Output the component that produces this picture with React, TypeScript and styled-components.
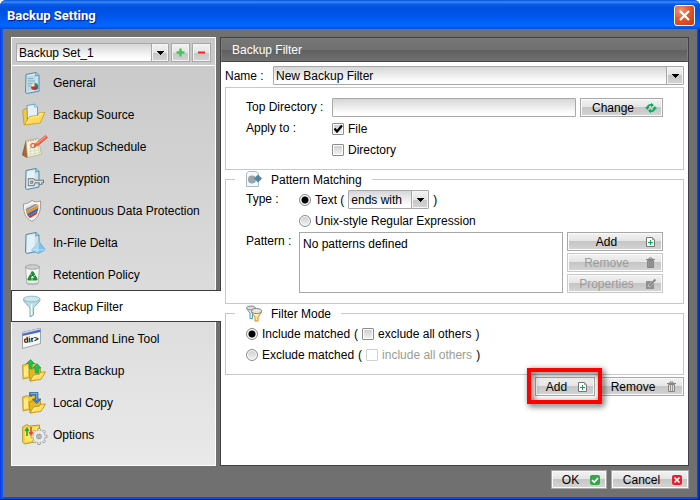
import React, { useState } from 'react';
import styled, { createGlobalStyle, css } from 'styled-components';

const GlobalStyle = createGlobalStyle`
  *, *::before, *::after { box-sizing: border-box; }
  body { margin: 0; background: #ffffff; }
  body, button, input, select {
    font-family: 'Liberation Sans', Arial, sans-serif;
    font-size: 12px;
    line-height: 16px;
    color: #000000;
  }
`;

const Window = styled.div`
  min-height: 100vh;
  display: flex;
  flex-direction: column;
  background: linear-gradient(90deg, #0831d9 0, #1660f0 2px, #0050e8 3px, #0050e8 calc(100% - 3px), #0040d8 calc(100% - 2px), #00138c 100%);
  border-bottom: 1px solid #00138c;
  border-radius: 6px 6px 0 0;
  overflow: hidden;
`;

const TitleBar = styled.header`
  height: 29px;
  flex: none;
  display: flex;
  align-items: center;
  justify-content: space-between;
  padding: 2px 5px 0 7px;
  background: linear-gradient(180deg, #0050d8 0%, #3c8cf8 7%, #0a5ce8 14%, #0050e0 28%, #0054e8 50%, #0062fc 78%, #0066ff 90%, #0048d0 100%);
`;

const Title = styled.h1`
  margin: 0;
  font: 700 13px/20px Roboto, 'Open Sans', sans-serif;
  color: #ffffff;
  text-shadow: 1px 1px 1px #0a1c80;
`;

const CloseButton = styled.button`
  width: 21px;
  height: 21px;
  padding: 0;
  display: grid;
  place-items: center;
  border: 1px solid #ffffff;
  border-radius: 3px;
  background: radial-gradient(circle at 30% 25%, #f09878 0%, #e5562c 45%, #c8370c 100%);
`;

const Body = styled.div`
  flex: 1;
  display: flex;
  flex-direction: column;
  gap: 4px;
  margin: 0 3px 2px;
  padding: 8px;
  background: #707070;
`;

const Columns = styled.div`
  flex: 1;
  display: flex;
  gap: 4px;
`;

const Sidebar = styled.aside`
  width: 205px;
  flex: none;
  border: 1px solid #ffffff;
  background: linear-gradient(180deg, #c8c8c8, #e9e9e9);
`;

const SetPicker = styled.div`
  display: flex;
  gap: 2px;
  padding: 5px 4px 3px;
  border-bottom: 1px solid #ffffff;
`;

const face = 'linear-gradient(180deg, #f2f2f2 0%, #e4e4e4 50%, #c6c6c6 50%, #d4d4d4 100%)';

const SquareButton = styled.button`
  width: 19px;
  height: 19px;
  padding: 0;
  display: grid;
  place-items: center;
  border: 1px solid #a8a8a8;
  background: ${face};
  box-shadow: inset 0 0 0 1px #f4f4f4;
`;

const SelectBox = styled.span<{ $grow?: boolean; $width?: number }>`
  display: inline-grid;
  height: 19px;
  border: 1px solid #a8a8a8;
  border-radius: 1px;
  background: #ffffff;
  ${p => p.$grow && css`flex: 1;`}
  ${p => p.$width && css`width: ${p.$width}px;`}
`;

const NativeSelect = styled.select`
  grid-area: 1 / 1;
  appearance: none;
  width: 100%;
  min-width: 0;
  height: 17px;
  border: 0;
  padding: 0 18px 0 2px;
  background: linear-gradient(180deg, #d6d6d6 0%, #ffffff 85%);
`;

const DropMark = styled.span`
  grid-area: 1 / 1;
  justify-self: end;
  display: grid;
  place-items: center;
  width: 17px;
  height: 17px;
  border-left: 1px solid #a8a8a8;
  background: ${face};
  box-shadow: inset 0 0 0 1px #f4f4f4;
  pointer-events: none;
`;

const NavList = styled.nav`
  display: flex;
  flex-direction: column;
`;

const NavItem = styled.a<{ $active?: boolean }>`
  display: flex;
  align-items: center;
  gap: 7px;
  height: 32px;
  padding: 2px 0 0 10px;
  color: #000000;
  text-decoration: none;
  white-space: nowrap;
  ${p => p.$active && css`
    position: relative;
    margin: 0 -6px 0 -1px;
    background: #ffffff;
    border: solid #3c3c3c;
    border-width: 1px 0 1px 1px;
  `}
`;

const NavIcon = styled.svg`
  width: 24px;
  height: 24px;
  flex: none;
  overflow: visible;
`;

const Panel = styled.main`
  flex: 1;
  min-width: 0;
  border: 1px solid #404040;
  background: #ffffff;
`;

const PanelTitle = styled.h2`
  margin: 0;
  height: 24px;
  padding: 3px 10px 4px;
  font-size: 12px;
  font-weight: 400;
  line-height: 16px;
  color: #ffffff;
  border: 1px solid #7c7c7c;
  border-bottom-color: #484848;
  background: linear-gradient(180deg, #757575 0%, #707070 48%, #5f5f5f 50%, #707070 100%);
`;

const PanelBody = styled.form`
  padding: 4px;
`;

const NameRow = styled.div`
  display: flex;
  align-items: center;
  margin-bottom: 2px;
`;

const NameLabel = styled.label`
  width: 48px;
`;

const Group = styled.fieldset`
  margin: 0;
  min-width: 0;
  padding: 10px 20px;
  border: 1px solid #c8c8c8;
`;

const TitledGroup = styled(Group)`
  margin-top: 1px;
  padding-top: 2px;
`;

const GroupTitle = styled.legend`
  display: flex;
  align-items: center;
  gap: 8px;
  height: 17px;
  margin-left: -11px;
  padding: 0 10px;
`;

const Rows = styled.div`
  display: grid;
  gap: 2px;
`;

const LabelledRows = styled.div<{ $label: number }>`
  display: grid;
  grid-template-columns: ${p => p.$label}px minmax(0, 1fr);
  gap: 2px 0;
`;

const Line = styled.div`
  display: flex;
  align-items: center;
  gap: 4px;
  min-height: 19px;
  white-space: nowrap;
`;

const SecondLine = styled(Line)`
  grid-column: 2;
`;

const FieldLabel = styled.label`
  line-height: 19px;
  white-space: nowrap;
`;

const TextInput = styled.input`
  flex: 1;
  min-width: 0;
  height: 19px;
  padding: 0 2px;
  border: 1px solid #a8a8a8;
  border-radius: 1px;
  background: linear-gradient(180deg, #d6d6d6 0%, #ffffff 85%);
`;

const Choice = styled.label<{ $off?: boolean }>`
  display: inline-flex;
  align-items: center;
  gap: 4px;
  color: ${p => (p.$off ? '#9c9c90' : '#000000')};
`;

const TickFrame = styled.span`
  display: inline-grid;
  place-items: center;
  width: 12px;
  height: 12px;
`;

const TickMark = styled.svg`
  grid-area: 1 / 1;
  pointer-events: none;
  visibility: hidden;
  input:checked + & { visibility: visible; }
`;

const Tick = styled.input`
  grid-area: 1 / 1;
  appearance: none;
  width: 12px;
  height: 12px;
  margin: 0;
  border: 1px solid #8c8c8c;
  border-radius: 1px;
  background: linear-gradient(180deg, #cccccc, #f4f4f4);
  box-shadow: inset 0 0 0 1px #ffffff;
  &:disabled { border-color: #d2d2d2; background: #ffffff; }
`;

const Radio = styled.input`
  appearance: none;
  width: 12px;
  height: 12px;
  margin: 0;
  border: 1px solid #8c8c8c;
  border-radius: 50%;
  background: linear-gradient(180deg, #cccccc, #f4f4f4);
  box-shadow: inset 0 0 0 1px #ffffff;
  &:checked { background: radial-gradient(circle, #000000 0 3px, #dddddd 4px); }
`;

const PatternList = styled.ul`
  flex: 1;
  min-width: 0;
  height: 61px;
  margin: 0;
  padding: 3px;
  list-style: none;
  border: 1px solid #a8a8a8;
`;

const ButtonStack = styled.div`
  display: grid;
  gap: 2px;
`;

const Button = styled.button<{ $width: number }>`
  width: ${p => p.$width}px;
  height: 19px;
  display: flex;
  align-items: center;
  padding: 0 5px 0 0;
  border: 1px solid #a8a8a8;
  background: ${face};
  box-shadow: inset 0 0 0 1px #fafafa;
  &:disabled { color: #9c9c9c; border-color: #c8c8c8; }
`;

const Caption = styled.span`
  flex: 1;
  text-align: center;
`;

const ButtonIcon = styled.svg`
  width: 12px;
  height: 12px;
  flex: none;
`;

const Actions = styled.div<{ $top?: number }>`
  display: flex;
  justify-content: flex-end;
  gap: 4px;
  margin-top: ${p => p.$top ?? 0}px;
`;

const Marked = styled.div`
  position: relative;
  z-index: 1;
`;

const Marker = styled.span`
  position: absolute;
  inset: -9px -7px -8px -8px;
  border: 4px solid #ff0000;
  filter: drop-shadow(2px 2px 3px rgba(0, 0, 0, 0.75));
  pointer-events: none;
`;

type DropDownProps = { id?: string; label?: string; options: string[]; grow?: boolean; width?: number };

const DropDown = ({ id, label, options, grow, width }: DropDownProps) => (
  <SelectBox $grow={grow} $width={width}>
    <NativeSelect id={id} aria-label={label}>
      {options.map(o => <option key={o}>{o}</option>)}
    </NativeSelect>
    <DropMark>
      <svg width="8" height="4" viewBox="0 0 8 4" shapeRendering="crispEdges"><path d="M0 0h8L4 4z" /></svg>
    </DropMark>
  </SelectBox>
);

const CheckBox = (props: React.InputHTMLAttributes<HTMLInputElement>) => (
  <TickFrame>
    <Tick type="checkbox" {...props} />
    <TickMark width="12" height="12" viewBox="0 0 12 12">
      <path d="M2.5 5.5 5 8.5 10 2.5" fill="none" stroke="#000" strokeWidth="2.2" />
    </TickMark>
  </TickFrame>
);

const Sheet = ({ children }: { children?: React.ReactNode }) => (
  <NavIcon viewBox="0 0 24 24">
    <path d="M4 3.5 14 1.5l3 2.6v16L4.6 22.5 3.5 21z" fill="#c9e3ed" stroke="#5588a4" />
    <path d="M5 4.5 13 3l-1 17-7 1.5z" fill="#fff" opacity=".5" />
    <path d="m14 1.5-.5 3.6 3.5-1" fill="#a4cbe0" stroke="#5588a4" strokeWidth=".7" />
    {children}
  </NavIcon>
);

const GeneralIcon = () => (
  <Sheet>
    <path d="M5 5 13 4v15l-8 2z" fill="#9fcbd8" opacity=".6" />
    <path d="M6 7.5h5M6 10h7M6 12.5h4M6 15h3" stroke="#7fb3c5" />
    <circle cx="12.5" cy="15.5" r="3.600" fill="#d62b20" />
    <path d="M12.5 15.5v-3.600a3.600 3.600 0 0 1 3.600 3.600z" fill="#2c9b50" />
    <path d="M12.5 15.5H8.9a3.600 3.600 0 0 1 3.600-3.600z" fill="#f0e8d0" />
    <path d="M12.5 15.5h3.600a3.600 3.600 0 0 1-2.600 3.500z" fill="#2b65ae" />
  </Sheet>
);

const SourceIcon = () => (
  <NavIcon viewBox="0 0 24 24">
    <path d="M.7 8.500 2 6l4-.5 2 2v13l-6 1z" fill="#f3c938" stroke="#b78b20" strokeWidth=".7" />
    <path d="m5 2.500 7.500-1.300 3 2.600v13L5.500 19z" fill="#e3f3f9" stroke="#6ba0bd" />
    <path d="m12.500 1.200-.2 3 3.200-.4" fill="#b9d9e8" stroke="#6ba0bd" strokeWidth=".6" />
    <path d="m2.500 22 5-8.500 8.500-1 1-2.500 5.800-.5-4.500 10.500z" fill="#ffdb53" stroke="#c79b28" strokeWidth=".8" />
    <path d="m4.500 20.500 4-6 8-1 1-2.500 3.500-.4" fill="none" stroke="#fff3a5" />
  </NavIcon>
);

const ScheduleIcon = () => (
  <NavIcon viewBox="0 0 24 24">
    <path d="m4 6-3.600 14L5 22.500 7 15z" fill="#a96735" stroke="#78421c" strokeWidth=".6" />
    <path d="m4 5.500 12-2.200 3.500 15.900-14 3.300z" fill="#f5f2dc" stroke="#b8a484" strokeWidth=".7" />
    <path d="M7 10l9-1.500M7.500 13.300l9.500-1.600M7.500 16.500l10-1.700M7.500 19.500l10.500-2M9 9 8 21M12.500 8l.5 12.500M15.500 8l2 11" stroke="#a6c49b" strokeWidth=".4" />
    <path d="M5.500 6.300 15 4.500" stroke="#b59a78" strokeWidth="1.200" strokeDasharray="1.500 1" />
    <circle cx="11" cy="10.500" r="2.200" fill="none" stroke="#e66a50" strokeWidth="1.200" />
    <path d="m12 11.500 2-3.500L23.500.5l2 2-9.500 8z" fill="#ef684b" stroke="#c8402c" strokeWidth=".6" />
    <path d="m14.500 8.500 9-7" stroke="#ffb0a0" />
  </NavIcon>
);

const EncryptionIcon = () => (
  <Sheet>
    <g fill="none" stroke="#6d7376" strokeWidth="3.400"><path d="M7.500 13h3.500l1.500 1.500-1.500 3H7.500z" /><path d="M12.500 14.500h9.500M18.500 15v3" /></g>
    <g fill="none" stroke="#dfe2e3" strokeWidth="1.600"><path d="M7.500 13h3.500l1.500 1.500-1.500 3H7.500z" /><path d="M12.500 14.500H21M18.500 15v2.200" /></g>
  </Sheet>
);

const ShieldIcon = () => (
  <NavIcon viewBox="0 0 24 24">
    <path d="M1.500 5c3 0 6-1.400 8.500-3.500C12.500 3 15 3.500 18.500 1.800c.8 8-1 16.700-8.700 20.500C3.600 19.300 1 13 1.500 5z" fill="#faf8f2" stroke="#a59a8d" />
    <path d="M3.500 7c3-.3 4.500-1.300 6.500-2.900 2 1 4 1.400 6.500.6.2 7.200-1.300 12.100-6.800 15.200C5.300 17.300 3.500 13 3.500 7z" fill="#e4e6e8" />
    <path d="m3.600 10 9.600-5c1 .4 2 .4 3.200 0L4 12.300z" fill="#8c9298" />
    <path d="m4 12.300 12.400-6.500v2.800L4.800 15z" fill="#f08c28" />
    <path d="m4.800 15 11.600-6.300-.4 3L6.200 17.500z" fill="#2f6fb8" />
    <path d="m6.200 17.500 9.700-5.400-1.400 3.200L8 19z" fill="#c83835" />
  </NavIcon>
);

const DeltaIcon = () => (
  <Sheet>
    <path d="m17 10.500 6.300 8.300-7 3.700-6.800-3.500z" fill="#a8daf3" stroke="#5f9ec8" strokeWidth=".8" />
    <path d="m17 10.500-.7 12 7-3.700z" fill="#73b5df" opacity=".7" />
    <path d="m17 10.500-7.500 8.500 13.800-.2" fill="none" stroke="#d9f3ff" strokeWidth=".6" />
  </Sheet>
);

const BinIcon = () => (
  <NavIcon viewBox="0 0 24 24">
    <path d="M3.500 4h14l-1.300 16.500c-2 1.700-9.400 1.700-11.400 0z" fill="#f4f4f4" stroke="#a5a5a5" strokeWidth=".8" />
    <ellipse cx="10.500" cy="4" rx="7" ry="2.300" fill="#cccece" stroke="#98999a" strokeWidth=".8" />
    <path d="M5 19c3 1.200 8 1.200 11 0l-.3 2c-2 1.300-8.400 1.300-10.400 0z" fill="#bcbcbc" />
    <path d="m10.500 9.500-3.800 6.800h7.600z" fill="none" stroke="#12942c" strokeWidth="2.600" strokeLinejoin="round" />
    <path d="m8 10.500 1.500 1.500M13.500 12l-1.500 1M10 17.500v-2.500" stroke="#f4f4f4" strokeWidth=".8" />
  </NavIcon>
);

const FunnelIcon = () => (
  <NavIcon viewBox="0 0 24 24">
    <path d="M1.500 4c0 4.500 6 6 6.500 10v8l3.500-2v-6c.5-4 6.500-5.500 6.500-10z" fill="#bcdce2" stroke="#74a8b5" strokeWidth=".9" />
    <ellipse cx="9.750" cy="4" rx="8.250" ry="2.800" fill="#cce8ed" stroke="#8db9c3" strokeWidth=".9" />
    <path d="M9.500 9v11" stroke="#eefafa" strokeWidth="1.500" />
  </NavIcon>
);

const TerminalLabel = styled.text`
  font: 700 8px 'Liberation Sans', sans-serif;
`;

const CommandIcon = () => (
  <NavIcon viewBox="0 0 24 24">
    <path d="m.5 5.500 18-4v15L.5 21.500z" fill="#f8f8f8" stroke="#8d9298" strokeWidth=".8" />
    <path d="m.5 5 18-4v4L.5 9z" fill="#4a6dc5" />
    <path d="m.5 5 18-4v1.600L.5 6.700z" fill="#d2d3dc" />
    <TerminalLabel x="2" y="16" transform="rotate(-7 2 16)">dir&gt;</TerminalLabel>
  </NavIcon>
);

const YellowFolders = () => (
  <>
    <path d="m.6 6 5-1.500 1.500 1.300 6-1.500v13L1 20z" fill="#f5ce3b" stroke="#b58e24" strokeWidth=".8" />
    <path d="m2 8 4-1v10l-4 1z" fill="#ffec83" />
    <path d="m7 11 4-1.500 1.500 1 6-1v10L8 22z" fill="#e4b72a" stroke="#a98018" strokeWidth=".7" />
    <path d="m8 22 3.500-6 6-.7 1-2 5-.4-4.500 7.500z" fill="#ffdf56" stroke="#b88c1d" strokeWidth=".8" />
    <path d="m10 20.500 2.300-3.400 6-.8 1-2" fill="none" stroke="#fff5ae" strokeWidth=".8" />
  </>
);

const ExtraIcon = () => (
  <NavIcon viewBox="0 0 24 24">
    <YellowFolders />
    <path d="m8.500.5 4 4h-2.300v5H7v-5H4.500zM15 4.500l4 4.500h-2.300v5h-3.400V9H11z" fill="#18c552" stroke="#0b9739" strokeWidth=".6" />
  </NavIcon>
);

const CopyIcon = () => (
  <NavIcon viewBox="0 0 24 24">
    <YellowFolders />
    <path d="M7.500 5V1.500H16V8h3l-4.300 4.500L10.500 8h3V4H10v1z" fill="#3e86c7" stroke="#245d94" strokeWidth=".7" />
    <path d="M9 2.500h5.800V9" fill="none" stroke="#8fc3ef" strokeWidth=".8" />
  </NavIcon>
);

const teeth = [0, 45, 90, 135, 180, 225, 270, 315];

const OptionsIcon = () => (
  <NavIcon viewBox="0 0 24 24">
    <path d="m.6 4 4-2.500 3 1.500L17.500 2v16L2.500 21 .6 19z" fill="#f6d337" stroke="#aa8a28" strokeWidth=".8" />
    <path d="m3 5.500 13-1.700V17L3 19z" fill="#ffe568" />
    <path d="M5 13V6M3.300 8 5 5.500 6.700 8" fill="none" stroke="#1da74a" strokeWidth="1.600" />
    <path d="M9 4v7M7.300 9 9 11.500 10.700 9" fill="none" stroke="#e14a30" strokeWidth="1.600" />
    {teeth.map(a => (
      <path key={a} d="m15.300 8.500.5-3h2.400l.5 3z" fill="#e6e7e9" stroke="#85898e" strokeWidth=".7" transform={`rotate(${a} 17 13.500)`} />
    ))}
    <circle cx="17" cy="13.500" r="4.100" fill="none" stroke="#8b8f94" strokeWidth="4" />
    <circle cx="17" cy="13.500" r="4.300" fill="none" stroke="#e9eaec" strokeWidth="3.200" />
    <circle cx="17" cy="13.500" r="2.100" fill="#b4b6b8" />
  </NavIcon>
);

const RefreshIcon = () => (
  <ButtonIcon viewBox="0 0 12 12">
    <path d="M2.200 6a3.600 3.600 0 0 1 5-2.800M9.800 6a3.600 3.600 0 0 1-5 2.800" fill="none" stroke="#10a85c" strokeWidth="1.900" />
    <path d="M6 .8 9 3.300 6 5.300zM6 11.200 3 8.700l3-2zM0 5h4.400L2.200 8zM12 7H7.600l2.200-3z" fill="#10a85c" />
  </ButtonIcon>
);

const AddIcon = () => (
  <ButtonIcon viewBox="0 0 12 12">
    <path d="M1.500 1.500h6l2 2v7h-8z" fill="#fff" stroke="#757575" />
    <path d="M7 1v3h3z" fill="#a5a5a5" />
    <path d="M5.500 4v5M3 6.500h5" stroke="#10a85c" />
  </ButtonIcon>
);

const TrashIcon = ({ solid }: { solid?: boolean }) => (
  <ButtonIcon viewBox="0 0 12 12">
    <path d="M1 2.500h9M4 2V1h3v1" fill="none" stroke="#858585" />
    <path d="M2.500 3.500h6v7h-6z" fill={solid ? '#979797' : '#dddddd'} stroke="#858585" />
    <path d="M4.500 4v6M6.500 4v6" stroke="#858585" strokeWidth=".8" />
  </ButtonIcon>
);

const EditIcon = () => (
  <ButtonIcon viewBox="0 0 12 12">
    <path d="M1 3h8v8H1z" fill="#8f8f8f" />
    <path d="m3.500 8.500 5-5" stroke="#dedede" strokeWidth="2.600" />
    <path d="m4 8 6.500-6.500" stroke="#858585" strokeWidth="1.800" />
  </ButtonIcon>
);

const OkIcon = () => (
  <ButtonIcon viewBox="0 0 12 12">
    <rect x="1" y="1" width="10" height="10" rx="2" fill="#34a648" />
    <path d="m3 6 2.200 2.200L9 4" fill="none" stroke="#fff" strokeWidth="1.700" />
  </ButtonIcon>
);

const CancelIcon = () => (
  <ButtonIcon viewBox="0 0 12 12">
    <rect x="1" y="1" width="10" height="10" rx="2" fill="#ed1c2e" />
    <path d="m3.500 3.500 5 5M8.500 3.500l-5 5" stroke="#fff" strokeWidth="1.700" />
  </ButtonIcon>
);

const PatternIcon = () => (
  <svg width="18" height="17" viewBox="0 0 18 17">
    <path d="M3.500.5h7.500l2.500 2v13h-12v-13z" fill="#f5f8fa" stroke="#a9bac5" />
    <circle cx="7" cy="8.500" r="4" fill="#9da3a6" />
    <path d="m13 3.500 4 4-4 4-4-4z" fill="#4b86a4" />
  </svg>
);

const ModeIcon = () => (
  <svg width="18" height="17" viewBox="0 0 18 17">
    <path d="M1.500 3.500 5 8v5.500h2.500V8L11 3.500z" fill="#e6f6fa" stroke="#3ba3bf" />
    <ellipse cx="6" cy="3" rx="4.500" ry="2" fill="#dddddd" stroke="#888888" />
    <path d="M6.500 7.500 10 12v4h3v-4l3.500-4.500z" fill="#fff0a0" stroke="#ef7b35" />
    <ellipse cx="11.500" cy="6" rx="5" ry="2.500" fill="#e6e6e6" stroke="#828282" />
  </svg>
);

const navigation = [
  { label: 'General', Icon: GeneralIcon },
  { label: 'Backup Source', Icon: SourceIcon },
  { label: 'Backup Schedule', Icon: ScheduleIcon },
  { label: 'Encryption', Icon: EncryptionIcon },
  { label: 'Continuous Data Protection', Icon: ShieldIcon },
  { label: 'In-File Delta', Icon: DeltaIcon },
  { label: 'Retention Policy', Icon: BinIcon },
  { label: 'Backup Filter', Icon: FunnelIcon },
  { label: 'Command Line Tool', Icon: CommandIcon },
  { label: 'Extra Backup', Icon: ExtraIcon },
  { label: 'Local Copy', Icon: CopyIcon },
  { label: 'Options', Icon: OptionsIcon },
];

export default function App() {
  const [active, setActive] = useState('Backup Filter');
  const [mode, setMode] = useState('include');

  return (
    <>
      <GlobalStyle />
      <Window>
        <TitleBar>
          <Title>Backup Setting</Title>
          <CloseButton type="button" aria-label="Close">
            <svg width="13" height="13" viewBox="0 0 13 13"><path d="m2 2 9 9M11 2l-9 9" stroke="#fff" strokeWidth="2.200" /></svg>
          </CloseButton>
        </TitleBar>
        <Body>
          <Columns>
            <Sidebar>
              <SetPicker>
                <DropDown grow label="Backup set" options={['Backup Set_1']} />
                <SquareButton type="button" aria-label="Add backup set">
                  <svg width="9" height="9" viewBox="0 0 9 9"><path d="M4.500.5v8M.5 4.500h8" stroke="#3ccb50" strokeWidth="2.400" /></svg>
                </SquareButton>
                <SquareButton type="button" aria-label="Remove backup set">
                  <svg width="9" height="9" viewBox="0 0 9 9"><path d="M1 4.500h7" stroke="#f02626" strokeWidth="2" /></svg>
                </SquareButton>
              </SetPicker>
              <NavList>
                {navigation.map(({ label, Icon }) => (
                  <NavItem
                    key={label}
                    href="#"
                    $active={label === active}
                    onClick={e => { e.preventDefault(); setActive(label); }}
                  >
                    <Icon />
                    {label}
                  </NavItem>
                ))}
              </NavList>
            </Sidebar>
            <Panel>
              <PanelTitle>Backup Filter</PanelTitle>
              <PanelBody onSubmit={e => e.preventDefault()}>
                <NameRow>
                  <NameLabel htmlFor="filter-name">Name :</NameLabel>
                  <DropDown grow id="filter-name" options={['New Backup Filter']} />
                </NameRow>

                <Group>
                  <LabelledRows $label={86}>
                    <FieldLabel htmlFor="top-directory">Top Directory :</FieldLabel>
                    <Line>
                      <TextInput id="top-directory" type="text" />
                      <Button type="button" $width={83}><Caption>Change</Caption><RefreshIcon /></Button>
                    </Line>
                    <FieldLabel as="span">Apply to :</FieldLabel>
                    <Line><Choice><CheckBox defaultChecked />File</Choice></Line>
                    <SecondLine><Choice><CheckBox />Directory</Choice></SecondLine>
                  </LabelledRows>
                </Group>

                <TitledGroup>
                  <GroupTitle><PatternIcon />Pattern Matching</GroupTitle>
                  <LabelledRows $label={53}>
                    <FieldLabel as="span">Type :</FieldLabel>
                    <Line>
                      <Choice><Radio type="radio" name="type" defaultChecked />Text (</Choice>
                      <DropDown width={81} label="Text match" options={['ends with', 'starts with', 'contains']} />
                      <span>)</span>
                    </Line>
                    <SecondLine>
                      <Choice><Radio type="radio" name="type" />Unix-style Regular Expression</Choice>
                    </SecondLine>
                    <FieldLabel as="span">Pattern :</FieldLabel>
                    <Line>
                      <PatternList aria-label="Pattern"><li>No patterns defined</li></PatternList>
                      <ButtonStack>
                        <Button type="button" $width={96}><Caption>Add</Caption><AddIcon /></Button>
                        <Button type="button" $width={96} disabled><Caption>Remove</Caption><TrashIcon solid /></Button>
                        <Button type="button" $width={96} disabled><Caption>Properties</Caption><EditIcon /></Button>
                      </ButtonStack>
                    </Line>
                  </LabelledRows>
                </TitledGroup>

                <TitledGroup>
                  <GroupTitle><ModeIcon />Filter Mode</GroupTitle>
                  <Rows>
                    <Line>
                      <Choice><Radio type="radio" name="mode" checked={mode === 'include'} onChange={() => setMode('include')} />Include matched</Choice>
                      <span>(</span>
                      <Choice $off={mode !== 'include'}><CheckBox disabled={mode !== 'include'} />exclude all others</Choice>
                      <span>)</span>
                    </Line>
                    <Line>
                      <Choice><Radio type="radio" name="mode" checked={mode === 'exclude'} onChange={() => setMode('exclude')} />Exclude matched</Choice>
                      <span>(</span>
                      <Choice $off={mode !== 'exclude'}><CheckBox disabled={mode !== 'exclude'} />include all others</Choice>
                      <span>)</span>
                    </Line>
                  </Rows>
                </TitledGroup>

                <Actions $top={2}>
                  <Marked>
                    <Button type="button" $width={60}><Caption>Add</Caption><AddIcon /></Button>
                    <Marker />
                  </Marked>
                  <Button type="button" $width={85}><Caption>Remove</Caption><TrashIcon /></Button>
                </Actions>
              </PanelBody>
            </Panel>
          </Columns>
          <Actions>
            <Button type="button" $width={56}><Caption>OK</Caption><OkIcon /></Button>
            <Button type="button" $width={78}><Caption>Cancel</Caption><CancelIcon /></Button>
          </Actions>
        </Body>
      </Window>
    </>
  );
}
